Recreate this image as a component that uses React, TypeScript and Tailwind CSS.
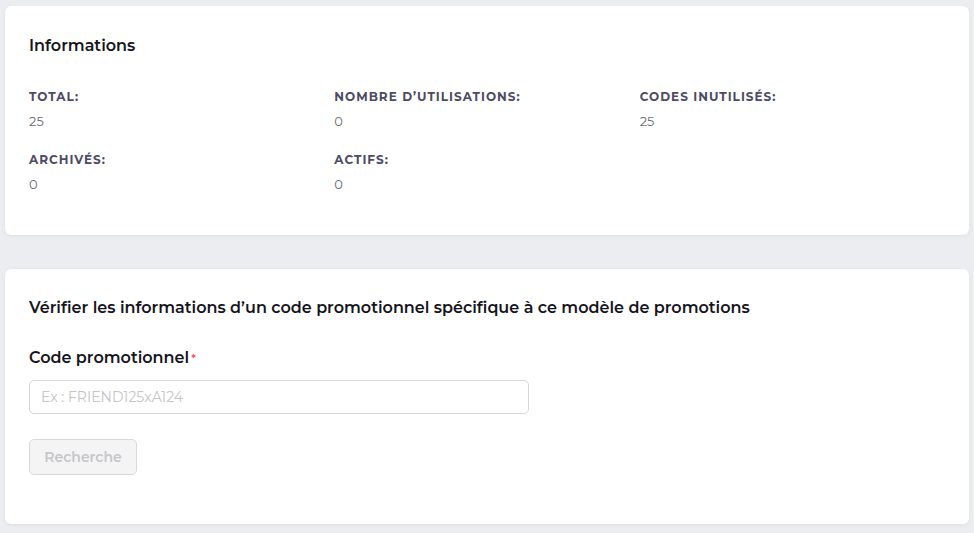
import React from 'react';

const stats = [
  { label: 'Total', value: '25' },
  { label: "Nombre d’utilisations", value: '0' },
  { label: 'Codes inutilisés', value: '25' },
  { label: 'Archivés', value: '0' },
  { label: 'Actifs', value: '0' },
];

const App: React.FC = () => {
  return (
    <div
      className="min-h-[533px] w-full bg-[#ecedf0] px-[5px] pt-[6px] pb-[9px]"
      style={{ fontFamily: 'Montserrat, Inter, "Noto Sans", sans-serif' }}
    >
      <section className="rounded-md bg-white px-6 pt-[30px] pb-[41px] shadow-[0_1px_4px_rgba(0,0,0,0.06)]">
        <h2 className="text-[16px] font-semibold leading-5 text-[#16151c]">Informations</h2>
        <div className="mt-[33px] grid grid-cols-3 gap-y-[21px]">
          {stats.map((s) => (
            <div key={s.label}>
              <p className="text-[12px] font-bold uppercase leading-4 tracking-[0.085em] text-[#4d4b63]">
                {s.label}:
              </p>
              <p className="mt-[6px] text-[13px] leading-5 text-[#6c6b78]">{s.value}</p>
            </div>
          ))}
        </div>
      </section>

      <section className="mt-[34px] rounded-md bg-white px-6 pt-[29px] pb-[49px] shadow-[0_1px_4px_rgba(0,0,0,0.06)]">
        <h2 className="text-[16px] font-semibold leading-5 text-[#16151c]">
          Vérifier les informations d’un code promotionnel spécifique à ce modèle de promotions
        </h2>
        <label className="mt-[30px] block text-[16px] font-semibold leading-5 text-[#16151c]">
          Code promotionnel<span className="ml-[2px] align-top text-[11px] text-[#ff4d4f]">*</span>
        </label>
        <input
          type="text"
          placeholder="Ex : FRIEND125xA124"
          className="mt-[12px] block h-[34px] w-[500px] rounded-[5px] border border-[#d5d5da] bg-white px-[11px] text-[14px] text-[#16151c] outline-none placeholder:text-[#c4c4c8]"
        />
        <button
          type="button"
          disabled
          className="mt-[25px] block h-[36px] w-[108px] rounded-[5px] border border-[#d9d9dc] bg-[#f4f4f5] text-[14px] font-semibold text-[#c6c6ca]"
        >
          Recherche
        </button>
      </section>
    </div>
  );
};

export default App;
